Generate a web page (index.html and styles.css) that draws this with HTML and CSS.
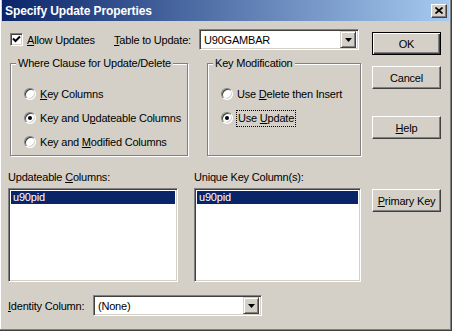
FILE: index.html
```html
<!DOCTYPE html>
<html>
<head>
<meta charset="utf-8">
<link rel="stylesheet" href="styles.css">
</head>
<body>
<div class="window">
  <div class="titlebar">
    <span class="title">Specify Update Properties</span>
    <span class="close-btn"><svg width="8" height="7" viewBox="0 0 8 7"><path d="M0.5 0.5 L7.5 6.5 M7.5 0.5 L0.5 6.5" stroke="#000" stroke-width="1.7"/></svg></span>
  </div>
  <div class="content">
    <div class="main">
      <div class="top-row">
        <span class="check"><svg width="9" height="9" viewBox="0 0 9 9"><path d="M1 3.5 L3.5 6 L8 1.5" fill="none" stroke="#000" stroke-width="2"/></svg></span>
        <span class="check-label"><u>A</u>llow Updates</span>
        <span class="table-label"><u>T</u>able to Update:</span>
        <div class="combo table-combo">
          <span class="combo-text">U90GAMBAR</span>
          <span class="combo-btn"><svg width="7" height="4" viewBox="0 0 7 4"><polygon points="0,0 7,0 3.5,4" fill="#000"/></svg></span>
        </div>
      </div>
      <div class="groups">
        <div class="group group-where">
          <span class="legend">Where Clause for Update/Delete</span>
          <div class="radio-row first"><span class="radio"></span><span class="radio-text"><u>K</u>ey Columns</span></div>
          <div class="radio-row"><span class="radio checked"></span><span class="radio-text">Key and U<u>p</u>dateable Columns</span></div>
          <div class="radio-row"><span class="radio"></span><span class="radio-text">Key and <u>M</u>odified Columns</span></div>
        </div>
        <div class="group group-key">
          <span class="legend">Key Modification</span>
          <div class="radio-row first"><span class="radio"></span><span class="radio-text">Use <u>D</u>elete then Insert</span></div>
          <div class="radio-row"><span class="radio checked"></span><span class="radio-text focus">Use <u>U</u>pdate</span></div>
        </div>
      </div>
      <div class="lists">
        <div class="list-col list-left">
          <div class="list-label">Updateable <u>C</u>olumns:</div>
          <div class="listbox"><div class="list-item selected">u90pid</div></div>
        </div>
        <div class="list-col list-right">
          <div class="list-label">Unique Key Column(s):</div>
          <div class="listbox"><div class="list-item selected">u90pid</div></div>
        </div>
      </div>
      <div class="identity-row">
        <span class="identity-label"><u>I</u>dentity Column:</span>
        <div class="combo identity-combo">
          <span class="combo-text">(None)</span>
          <span class="combo-btn"><svg width="7" height="4" viewBox="0 0 7 4"><polygon points="0,0 7,0 3.5,4" fill="#000"/></svg></span>
        </div>
      </div>
    </div>
    <div class="buttons">
      <div class="btn btn-default btn-ok">OK</div>
      <div class="btn btn-cancel">Cancel</div>
      <div class="btn btn-help"><u>H</u>elp</div>
      <div class="btn btn-primary"><u>P</u>rimary Key</div>
    </div>
  </div>
</div>
</body>
</html>
```
FILE: styles.css
```css
* { box-sizing: border-box; }
body {
  margin: 0;
  font-family: "Liberation Sans", Arial, sans-serif;
  font-size: 11px;
  letter-spacing: -0.2px;
  color: #000;
  background: #D4D0C8;
}
u { text-decoration: underline; text-underline-offset: 1px; }
.window {
  width: 452px;
  height: 331px;
  background: #D4D0C8;
  border-right: 1px solid #404040;
  border-bottom: 1px solid #404040;
  box-shadow: inset -1px -1px #808080, inset 1px 0 #fff;
  padding: 0 2px 2px 2px;
  display: flex;
  flex-direction: column;
}
.titlebar {
  height: 21px;
  background: linear-gradient(90deg, #0A246A, #A6CAF0);
  display: flex;
  align-items: center;
  justify-content: space-between;
  padding: 0 2px 0 3px;
  color: #fff;
  font-weight: bold;
  font-size: 12px;
  letter-spacing: -0.1px;
}
.close-btn {
  width: 16px;
  height: 14px;
  background: #D4D0C8;
  border: 1px solid;
  border-color: #fff #404040 #404040 #fff;
  box-shadow: inset -1px -1px #808080;
  display: flex;
  align-items: center;
  justify-content: center;
}
.content {
  display: flex;
  padding-left: 6px;
}
.main {
  width: 354px;
  display: flex;
  flex-direction: column;
}
.top-row {
  margin-top: 8px;
  height: 21px;
  display: flex;
  align-items: center;
  padding-left: 2px;
}
.check {
  width: 13px;
  height: 13px;
  background: #fff;
  border: 1px solid;
  border-color: #808080 #fff #fff #808080;
  box-shadow: inset 1px 1px #404040, inset -1px -1px #D4D0C8;
  display: flex;
  align-items: center;
  justify-content: center;
}
.check-label { margin-left: 4px; width: 87px; }
.table-label { width: 85px; }
.combo {
  height: 21px;
  background: #fff;
  border: 1px solid;
  border-color: #808080 #fff #fff #808080;
  box-shadow: inset 1px 1px #404040, inset -1px -1px #D4D0C8;
  display: flex;
  align-items: center;
  justify-content: space-between;
  padding: 2px;
}
.table-combo { width: 160px; }
.combo-text { padding-left: 2px; }
.combo-btn {
  width: 16px;
  height: 17px;
  background: #D4D0C8;
  border: 1px solid;
  border-color: #D4D0C8 #404040 #404040 #D4D0C8;
  box-shadow: inset 1px 1px #fff, inset -1px -1px #808080;
  display: flex;
  align-items: center;
  justify-content: center;
}
.groups {
  display: flex;
  margin-top: 13px;
  padding-left: 2px;
  gap: 19px;
}
.group {
  height: 93px;
  border: 1px solid #808080;
  box-shadow: inset 1px 1px #fff, 1px 1px #fff;
  display: flex;
  flex-direction: column;
  align-items: flex-start;
}
.group-where { width: 178px; }
.group-key { width: 154px; }
.legend {
  margin: -7px 0 0 5px;
  padding: 0 2px;
  background: #D4D0C8;
  line-height: 13px;
  height: 13px;
}
.radio-row {
  height: 24px;
  display: flex;
  align-items: center;
  padding-left: 13px;
}
.radio-row.first { margin-top: 12px; }
.radio {
  width: 12px;
  height: 12px;
  border-radius: 50%;
  background: #fff;
  border: 1px solid;
  border-color: #808080 #fff #fff #808080;
  box-shadow: inset 1px 1px #404040, inset -1px -1px #D4D0C8;
  display: flex;
  align-items: center;
  justify-content: center;
}
.radio.checked::after {
  content: "";
  width: 4px;
  height: 4px;
  border-radius: 50%;
  background: #000;
}
.radio-text { margin-left: 4px; line-height: 13px; }
.radio-text.focus {
  outline: 1px dotted #000;
  outline-offset: 1px;
  margin-left: 5px;
}
.lists {
  display: flex;
  gap: 16px;
  margin-top: 15px;
}
.list-left { width: 170px; }
.list-right { width: 167px; }
.list-label { line-height: 13px; height: 13px; }
.listbox {
  margin-top: 4px;
  height: 94px;
  background: #fff;
  border: 1px solid;
  border-color: #808080 #fff #fff #808080;
  box-shadow: inset 1px 1px #404040, inset -1px -1px #D4D0C8;
  padding: 2px;
}
.list-item {
  height: 13px;
  line-height: 13px;
  padding-left: 2px;
}
.list-item.selected { background: #0A246A; color: #fff; }
.identity-row {
  margin-top: 13px;
  height: 21px;
  display: flex;
  align-items: center;
}
.identity-label { width: 85px; }
.identity-combo { width: 169px; }
.buttons {
  width: 69px;
  margin-left: 10px;
  display: flex;
  flex-direction: column;
  padding-top: 11px;
}
.btn {
  height: 23px;
  display: flex;
  align-items: center;
  justify-content: center;
  border: 1px solid;
  border-color: #fff #404040 #404040 #fff;
  box-shadow: inset -1px -1px #808080;
}
.btn-default {
  border: 1px solid #000;
  box-shadow: inset 1px 1px #fff, inset -1px -1px #404040, inset -2px -2px #808080;
}
.btn-cancel { margin-top: 11px; }
.btn-help { margin-top: 27px; }
.btn-primary { margin-top: 50px; }
```
